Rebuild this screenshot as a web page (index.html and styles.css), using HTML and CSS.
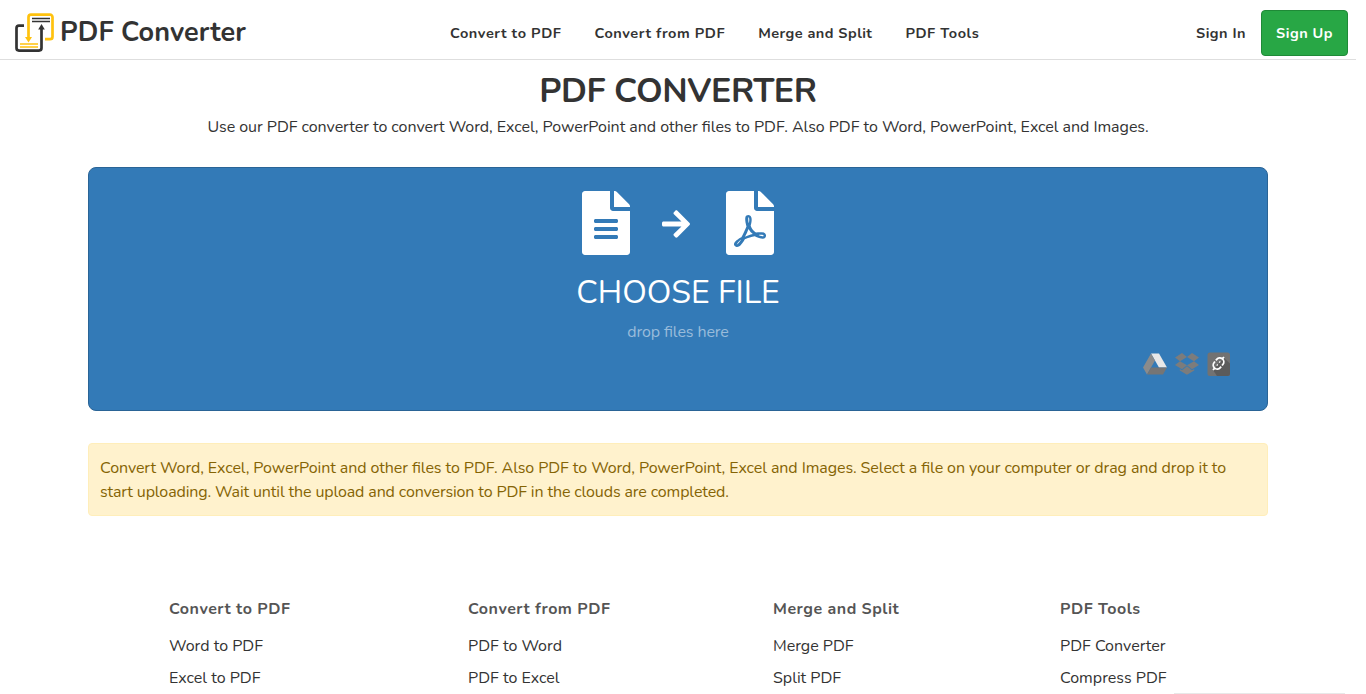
FILE: index.html
```
<!DOCTYPE html>
<html lang="en">
<head>
<meta charset="utf-8">
<title>PDF Converter</title>
<link rel="stylesheet" href="styles.css">
</head>
<body>
<header class="navbar">
  <a class="brand">
    <svg class="logo" width="42" height="42" viewBox="0 0 42 42" fill="none">
      <path d="M10 13.600H5a2.500 2.500 0 0 0-2.500 2.500v20a2.500 2.500 0 0 0 2.500 2.500h20a2.500 2.500 0 0 0 2.500-2.500V15" stroke="#333" stroke-width="2.700"/>
      <path d="M24.200 17.500 27.500 12l3.300 5.500z" fill="#333"/>
      <path d="M14.500 28V5.200A2.500 2.500 0 0 1 17 2.700h19a2.500 2.500 0 0 1 2.500 2.500v19.500a2.500 2.500 0 0 1-2.500 2.500h-5" stroke="#ffc20e" stroke-width="2.700"/>
      <path d="M11 25h7l-3.500 5.500z" fill="#ffc20e"/>
      <path d="M18 6.600h18M18 9.500h18" stroke="#333" stroke-width="1.500"/>
      <path d="M6 32h18M6 35h18" stroke="#ffc20e" stroke-width="1.700"/>
    </svg>
    <span class="brand-name">PDF Converter</span>
  </a>
  <nav class="menu">
    <a>Convert to PDF</a><a>Convert from PDF</a><a>Merge and Split</a><a>PDF Tools</a>
  </nav>
  <div class="account"><a>Sign In</a><a class="signup">Sign Up</a></div>
</header>
<main>
  <h1 class="title">PDF CONVERTER</h1>
  <p class="lead">Use our PDF converter to convert Word, Excel, PowerPoint and other files to PDF. Also PDF to Word, PowerPoint, Excel and Images.</p>
  <section class="dropzone">
    <div class="flow">
      <svg width="48" height="64" viewBox="0 0 384 512" fill="#fff"><path d="M224 136V0H24C10.700 0 0 10.700 0 24v464c0 13.300 10.700 24 24 24h336c13.300 0 24-10.700 24-24V160H248c-13.200 0-24-10.800-24-24zm64 236c0 6.600-5.400 12-12 12H108c-6.600 0-12-5.400-12-12v-8c0-6.600 5.400-12 12-12h168c6.600 0 12 5.400 12 12v8zm0-64c0 6.600-5.400 12-12 12H108c-6.600 0-12-5.400-12-12v-8c0-6.600 5.400-12 12-12h168c6.600 0 12 5.400 12 12v8zm0-72v8c0 6.600-5.400 12-12 12H108c-6.600 0-12-5.400-12-12v-8c0-6.600 5.400-12 12-12h168c6.600 0 12 5.400 12 12zm96-114.100v6.100H256V0h6.100c6.400 0 12.500 2.500 17 7l97.900 98c4.500 4.500 7 10.600 7 16.900z"/></svg>
      <svg class="arrow" width="28" height="32" viewBox="0 0 448 512" fill="#fff"><path d="M190.500 66.900l22.200-22.200c9.400-9.400 24.600-9.400 33.900 0L441 239c9.400 9.400 9.400 24.600 0 33.900L246.600 467.300c-9.400 9.400-24.600 9.400-33.900 0l-22.200-22.200c-9.500-9.500-9.300-25 .4-34.300L311.400 296H24c-13.300 0-24-10.700-24-24v-32c0-13.300 10.700-24 24-24h287.400L190.900 101.200c-9.800-9.300-10-24.800-.4-34.300z"/></svg>
      <svg width="48" height="64" viewBox="0 0 384 512" fill="#fff"><path d="M181.900 256.100c-5-16-4.900-46.900-2-46.900 8.400 0 7.600 36.900 2 46.900zm-1.700 47.200c-7.700 20.200-17.300 43.300-28.400 62.700 18.300-7 39-17.200 62.900-21.900-12.700-9.600-24.900-23.400-34.500-40.800zM86.100 428.100c0 .8 13.200-5.400 34.900-40.200-6.700 6.300-29.100 24.500-34.900 40.200zM248 160h136v328c0 13.300-10.700 24-24 24H24c-13.300 0-24-10.700-24-24V24C0 10.700 10.700 0 24 0h200v136c0 13.200 10.800 24 24 24zm-8 171.800c-20-12.200-33.300-29-42.700-53.800 4.500-18.500 11.600-46.600 6.200-64.200-4.700-29.400-42.400-26.500-47.800-6.800-5 18.300-.4 44.100 8.100 77-11.600 27.600-28.700 64.600-40.800 85.800-.1 0-.1.1-.2.1-27.100 13.900-73.600 44.500-54.500 68 5.600 6.900 16 10 21.500 10 17.900 0 35.700-18 61.100-61.800 25.800-8.500 54.100-19.100 79-23.200 21.700 11.800 47.100 19.500 64 19.500 29.200 0 31.200-32 19.700-43.400-13.900-13.600-54.300-9.700-73.600-7.200zM377 105L279 7c-4.500-4.500-10.600-7-17-7h-6v128h128v-6.100c0-6.300-2.500-12.400-7-16.900zm-74.100 255.300c4.100-2.700-2.500-11.900-42.800-9 37.100 15.800 42.800 9 42.800 9z"/></svg>
    </div>
    <div class="choose">CHOOSE FILE</div>
    <div class="hint">drop files here</div>
    <div class="sources">
      <svg width="24" height="24" viewBox="0 0 24 24">
        <path d="M8 1.500h8l8 14h-8z" fill="#e8e8e8"/>
        <path d="M8 1.500 0 15.500l4 7 8-14z" fill="#8b8b8b"/>
        <path d="M8 15.500h16l-4 7H4z" fill="#757575"/>
      </svg>
      <svg width="24" height="24" viewBox="0 0 24 24" fill="#7c7c7c">
        <path d="m7 1 5 4-7 4.200L0 5.400zM17 1l-5 4 7 4.200 5-3.800zM0 13l5-3.800L12 13.300l-5 4zM24 13l-5-3.800-7 4.100 5 4zM12 14.300l5 4 2.200-1.400v1.700L12 22.800l-7.200-4.200v-1.700L7 18.300z"/>
      </svg>
      <svg width="24" height="24" viewBox="0 0 24 24">
        <rect x="0.500" y="0.500" width="22.500" height="23.500" rx="2.500" fill="#727272"/>
        <path d="m17 6 6 5.500v10a2.500 2.500 0 0 1-2.500 2.500H10l-4-6z" fill="#5b5b5b"/>
        <g transform="rotate(-50 11.500 11.500)" fill="none" stroke="#fff" stroke-width="1.800"><path d="M10.800 7.500H9.500a4 4 0 0 0 0 8h1.300M12.200 7.500h1.300a4 4 0 0 1 0 8h-1.300M3 11.500h2.500M17.500 11.500H20"/><path d="M8.800 11.500h1.500M12.700 11.500h1.500" stroke-width="1.300"/></g>
      </svg>
    </div>
  </section>
  <p class="alert">Convert Word, Excel, PowerPoint and other files to PDF. Also PDF to Word, PowerPoint, Excel and Images. Select a file on your computer or drag and drop it to <span class="alert-steps">start uploading. Wait until the upload and conversion to PDF in the clouds are completed.</span></p>
</main>
<footer class="footer">
  <div class="col"><h2>Convert to PDF</h2><a>Word to PDF</a><a>Excel to PDF</a></div>
  <div class="col"><h2>Convert from PDF</h2><a>PDF to Word</a><a>PDF to Excel</a></div>
  <div class="col"><h2>Merge and Split</h2><a>Merge PDF</a><a>Split PDF</a></div>
  <div class="col"><h2>PDF Tools</h2><a>PDF Converter</a><a>Compress PDF</a></div>
</footer>
<div class="panel-edge"></div>
</body>
</html>
```

FILE: styles.css
```
* { box-sizing: border-box; }
html { height: 100%; overflow: hidden; background: #fff; }
body { position: relative; width: 1356px; height: 694px; margin: 0; overflow: hidden; font: 400 16px/24px Nunito, Lato, sans-serif; color: #333; }
svg { display: block; flex: none; }
h1, h2, p { margin: 0; }
.navbar { display: grid; grid-template-columns: 450px 1fr auto; align-items: center; height: 60px; padding: 6px 8px 0 0; border-bottom: 1px solid #dedede; font-size: 14.5px; font-weight: 700; letter-spacing: .5px; }
.brand { display: flex; align-items: center; padding-left: 14px; }
.logo { margin-right: 4px; }
.brand-name { padding-top: 1px; font-size: 27px; font-weight: 700; line-height: 36px; letter-spacing: .1px; }
.menu { display: flex; gap: 33px; letter-spacing: .57px; }
.menu a:nth-child(3) { letter-spacing: .46px; }
.account { display: flex; align-items: center; gap: 15px; }
.signup { display: flex; align-items: center; height: 46px; padding: 0 14px; border: 1px solid #1f8a37; border-radius: 4px; background: #28a745; color: #fff; }
.title { padding-top: 8px; font-size: 34px; line-height: 46px; font-weight: 700; letter-spacing: -.42px; text-align: center; }
.lead { margin-top: 1px; letter-spacing: -.042px; font-feature-settings: "liga" 1; text-align: center; }
.dropzone { width: 1180px; height: 244px; margin: 28px auto 0; padding-top: 23px; border: 1px solid #2a6496; border-radius: 8px; background: #337ab7; color: #fff; text-align: center; }
.flow { display: flex; justify-content: center; align-items: center; gap: 32px; }
.arrow { margin: 2px 4px 0 0; }
.choose { margin-top: 14px; font-size: 32px; line-height: 48px; }
.hint { margin-top: 3px; color: #99bcdb; letter-spacing: -.1px; font-feature-settings: "liga" 1; }
.sources { display: flex; justify-content: flex-end; gap: 8px; padding: 8px 36px 0 0; }
.alert { width: 1180px; height: 73px; margin: 32px auto 0; padding: 12px 11px; border: 1px solid #ffeeba; border-radius: 4px; background: #fff2cd; color: #856404; letter-spacing: -.077px; font-feature-settings: "liga" 1; }
.alert-steps { letter-spacing: -.13px; }
.footer { display: grid; grid-template-columns: 299px 305px 287px auto; padding: 81px 0 0 169px; }
.col { display: flex; flex-direction: column; gap: 8px; }
.col h2 { margin-bottom: 5px; font-size: 16px; line-height: 24px; letter-spacing: .52px; color: #555; }
.panel-edge { position: absolute; left: 1174px; bottom: 0; width: 171px; height: 1px; background: #e8e8e8; }
```
